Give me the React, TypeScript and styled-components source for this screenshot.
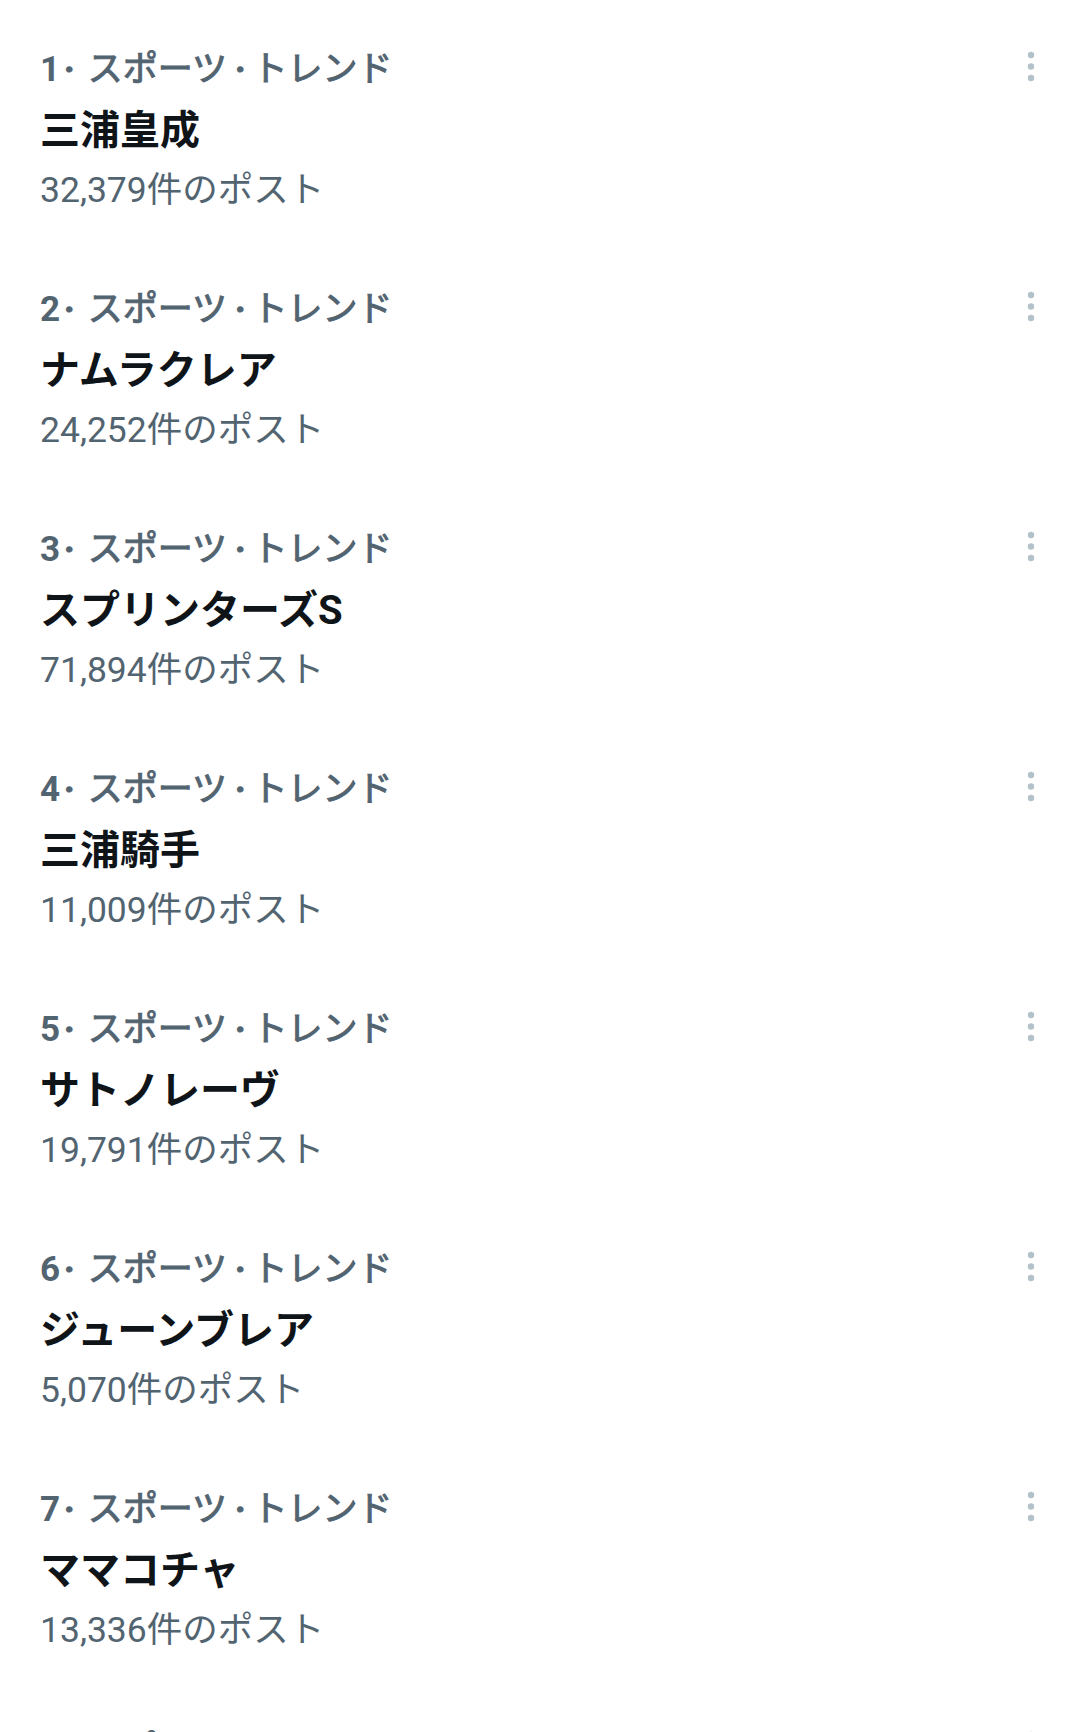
import React, { Fragment } from 'react';
import styled, { createGlobalStyle } from 'styled-components';

type Trend = {
  rank: number;
  category: string[];
  name: string;
  posts: string;
};

const sports = ['スポーツ', 'トレンド'];

const trends: Trend[] = [
  { rank: 1, category: sports, name: '三浦皇成', posts: '32,379' },
  { rank: 2, category: sports, name: 'ナムラクレア', posts: '24,252' },
  { rank: 3, category: sports, name: 'スプリンターズS', posts: '71,894' },
  { rank: 4, category: sports, name: '三浦騎手', posts: '11,009' },
  { rank: 5, category: sports, name: 'サトノレーヴ', posts: '19,791' },
  { rank: 6, category: sports, name: 'ジューンブレア', posts: '5,070' },
  { rank: 7, category: sports, name: 'ママコチャ', posts: '13,336' },
  { rank: 8, category: sports, name: 'ルガル', posts: '8,412' },
];

export default function App() {
  return (
    <>
      <GlobalStyle />
      <Page>
        <TrendList>
          {trends.map((trend) => (
            <TrendRow key={trend.rank}>
              <TrendBody>
                <TrendMeta>
                  <Rank>{trend.rank}</Rank>
                  {trend.category.map((part, i) => (
                    <Fragment key={part}>
                      <Sep $first={i === 0}>·</Sep>
                      {part}
                    </Fragment>
                  ))}
                </TrendMeta>
                <TrendName>{trend.name}</TrendName>
                <PostCount>{trend.posts}件のポスト</PostCount>
              </TrendBody>

              <MoreButton aria-label="その他">
                <svg width="12" height="32" viewBox="0 0 12 32">
                  <circle cx="6" cy="5" r="3.2" />
                  <circle cx="6" cy="16.5" r="3.2" />
                  <circle cx="6" cy="28" r="3.2" />
                </svg>
              </MoreButton>
            </TrendRow>
          ))}
        </TrendList>
      </Page>
    </>
  );
}

const GlobalStyle = createGlobalStyle`
  html, body {
    margin: 0;
    padding: 0;
    background: #ffffff;
  }

  body {
    font-family: Roboto, "Noto Sans CJK JP", sans-serif;
    -webkit-font-smoothing: antialiased;
  }
`;

const Page = styled.div`
  width: 1080px;
  height: 1732px;
  overflow: hidden;
  background: #ffffff;
`;

const TrendList = styled.div`
  display: flex;
  flex-direction: column;
`;

const TrendRow = styled.div`
  height: 240px;
  box-sizing: border-box;
  padding: 40px 43px 0 40px;

  display: flex;
  align-items: flex-start;
`;

const TrendBody = styled.div`
  flex: 1;
  display: flex;
  flex-direction: column;
`;

// medium weight is not installed for the CJK face, so thicken the regular one a bit
const TrendMeta = styled.div`
  font-size: 35px;
  line-height: 60px;
  font-weight: 400;
  color: #536471;
  -webkit-text-stroke: 1px #536471;
  white-space: nowrap;
`;

const Rank = styled.span`
  font-weight: 700;
  -webkit-text-stroke: 0;
`;

const Sep = styled.span<{ $first?: boolean }>`
  font-weight: 700;
  margin: ${(p) => (p.$first ? '0 13px 0 4px' : '0 7px 0 8px')};
`;

const TrendName = styled.div`
  font-size: 40px;
  line-height: 62px;
  font-weight: 700;
  color: #0f1419;
  white-space: nowrap;
`;

const PostCount = styled.div`
  font-size: 35.5px;
  line-height: 56px;
  font-weight: 400;
  color: #536471;
  white-space: nowrap;
`;

const MoreButton = styled.div`
  width: 12px;
  margin-top: 10px;

  svg {
    display: block;
    fill: #b3c1cb;
  }
`;
